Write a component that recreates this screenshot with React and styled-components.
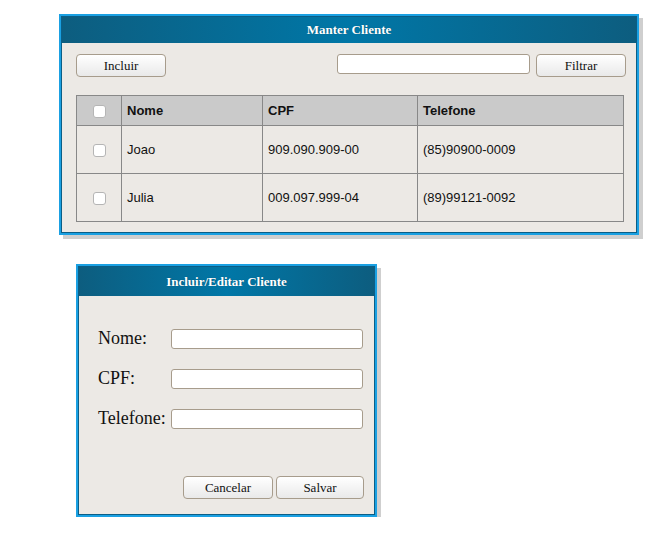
import React from "react";
import styled, { createGlobalStyle } from "styled-components";

const Global = createGlobalStyle`
  html, body { margin: 0; padding: 0; background: #ffffff; }
  * { box-sizing: border-box; }
`;

const Page = styled.div`
  padding: 14px 0 0 59px;
  display: flex;
  flex-direction: column;
  align-items: flex-start;
  font-family: "Liberation Serif", "Times New Roman", serif;
`;

const Window = styled.section`
  width: ${(p) => p.$w}px;
  height: ${(p) => p.$h}px;
  margin-left: ${(p) => p.$ml || 0}px;
  margin-top: ${(p) => p.$mt || 0}px;
  border: 2px solid #1aa0e2;
  box-shadow: 4px 4px 0 #cfcfcf;
  background: #ece9e5;
  display: flex;
`;

const Inner = styled.div`
  flex: 1;
  border: 1px solid #0b5e86;
  display: flex;
  flex-direction: column;
`;

const TitleBar = styled.header`
  height: ${(p) => p.$h}px;
  flex: none;
  background: linear-gradient(90deg, #0d5d7f 0%, #0077a7 50%, #0d5d7f 100%);
  color: #fff;
  font-weight: bold;
  font-size: 13px;
  display: flex;
  align-items: center;
  justify-content: center;
  text-shadow: 0 0 1px rgba(0,0,0,0.3);
`;

const Body = styled.div`
  padding: 11px 10px 0 14px;
  display: flex;
  flex-direction: column;
`;

const Toolbar = styled.div`
  display: flex;
  align-items: flex-start;
  gap: 6px;
`;

const Spacer = styled.div`
  flex: 1;
`;

const Button = styled.button`
  width: ${(p) => p.$w || 90}px;
  height: 23px;
  border: 1px solid #a79c8c;
  border-radius: 4px;
  background: linear-gradient(#ffffff, #e9e9e9);
  font-family: "Liberation Serif", "Times New Roman", serif;
  font-size: 13px;
  color: #111;
  padding: 0;
`;

const TextInput = styled.input`
  width: ${(p) => p.$w || 192}px;
  height: 20px;
  border: 1px solid #a79c8c;
  border-radius: 3px;
  background: #fff;
  padding: 0 4px;
`;

const Table = styled.table`
  margin-top: 18px;
  width: 547px;
  border-collapse: collapse;
  table-layout: fixed;
  font-family: "Liberation Sans", Arial, sans-serif;
  font-size: 13px;
  color: #111;
  border: 1px solid #888;
`;

const Th = styled.th`
  height: 30px;
  background: #cacaca;
  text-align: ${(p) => (p.$center ? "center" : "left")};
  font-weight: bold;
  padding: 0 5px;
  border: 1px solid #888;
  width: ${(p) => p.$w}px;
`;

const Td = styled.td`
  height: 48px;
  padding: 0 5px;
  text-align: ${(p) => (p.$center ? "center" : "left")};
  border: 1px solid #888;
`;

const Check = styled.span`
  display: inline-block;
  width: 13px;
  height: 13px;
  border: 1px solid #b5b5b5;
  border-radius: 3px;
  background: #fff;
  vertical-align: middle;
`;

const Form = styled.div`
  padding: 33px 9px 0 19px;
  display: grid;
  grid-template-columns: 73px 192px;
  row-gap: 20px;
  align-items: center;
`;

const Label = styled.label`
  font-size: 18px;
  line-height: 20px;
  color: #111;
  white-space: nowrap;
  margin-top: -3px;
`;

const Actions = styled.div`
  margin-top: auto;
  padding: 0 10px 15px 0;
  display: flex;
  justify-content: flex-end;
  gap: 3px;
`;

const rows = [
  { nome: "Joao", cpf: "909.090.909-00", tel: "(85)90900-0009" },
  { nome: "Julia", cpf: "009.097.999-04", tel: "(89)99121-0092" },
];

export default function App() {
  return (
    <>
      <Global />
      <Page>
        <Window $w={580} $h={221}>
          <Inner>
            <TitleBar $h={26}>Manter Cliente</TitleBar>
            <Body>
              <Toolbar>
                <Button>Incluir</Button>
                <Spacer />
                <TextInput $w={193} />
                <Button>Filtrar</Button>
              </Toolbar>
              <Table>
                <thead>
                  <tr>
                    <Th $w={45} $center><Check /></Th>
                    <Th $w={141}>Nome</Th>
                    <Th $w={155}>CPF</Th>
                    <Th $w={206}>Telefone</Th>
                  </tr>
                </thead>
                <tbody>
                  {rows.map((r) => (
                    <tr key={r.nome}>
                      <Td $center><Check /></Td>
                      <Td>{r.nome}</Td>
                      <Td>{r.cpf}</Td>
                      <Td>{r.tel}</Td>
                    </tr>
                  ))}
                </tbody>
              </Table>
            </Body>
          </Inner>
        </Window>
        <Window $w={301} $h={253} $ml={17} $mt={29}>
          <Inner>
            <TitleBar $h={29}>Incluir/Editar Cliente</TitleBar>
            <Form>
              <Label>Nome:</Label>
              <TextInput />
              <Label>CPF:</Label>
              <TextInput />
              <Label>Telefone:</Label>
              <TextInput />
            </Form>
            <Actions>
              <Button>Cancelar</Button>
              <Button $w={88}>Salvar</Button>
            </Actions>
          </Inner>
        </Window>
      </Page>
    </>
  );
}
